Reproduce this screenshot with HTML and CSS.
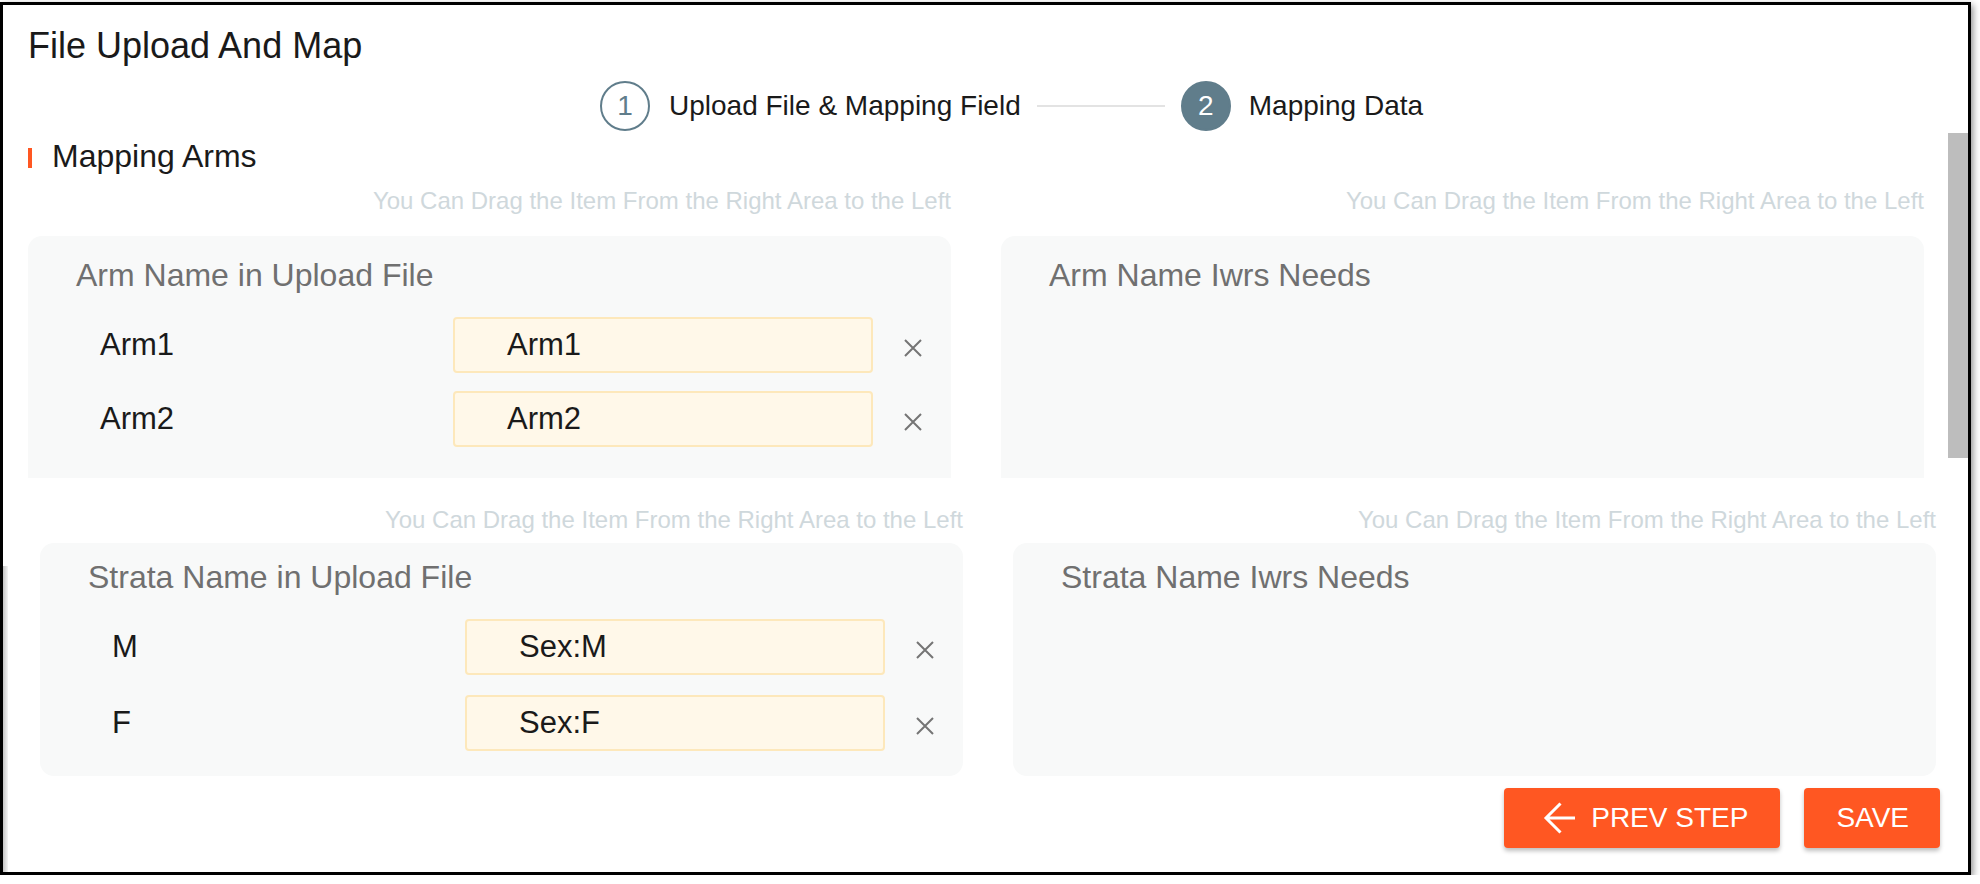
FILE: index.html
```html
<!DOCTYPE html>
<html lang="en">
<head>
  <meta charset="UTF-8">
  <title>File Upload And Map</title>
  <link rel="stylesheet" href="styles.css">
</head>
<body>

<div class="dialog">
  <h1 class="dialog-title">File Upload And Map</h1>

  <div class="stepper">
    <div class="step">
      <span class="step-num">1</span>
      <span class="step-label">Upload File &amp; Mapping Field</span>
    </div>
    <div class="step-line"></div>
    <div class="step active">
      <span class="step-num">2</span>
      <span class="step-label">Mapping Data</span>
    </div>
  </div>

  <h2 class="section-title">Mapping Arms</h2>

  <div class="mapping mapping-arms">
    <div class="mapping-col">
      <p class="hint">You Can Drag the Item From the Right Area to the Left</p>
      <div class="card">
        <h3 class="card-title">Arm Name in Upload File</h3>
        <div class="rows">
          <div class="row">
            <span class="row-label">Arm1</span>
            <div class="drop">Arm1</div>
            <svg class="remove" viewBox="0 0 18 18"><path d="M1 1L17 17M17 1L1 17"/></svg>
          </div>
          <div class="row">
            <span class="row-label">Arm2</span>
            <div class="drop">Arm2</div>
            <svg class="remove" viewBox="0 0 18 18"><path d="M1 1L17 17M17 1L1 17"/></svg>
          </div>
        </div>
      </div>
    </div>
    <div class="mapping-col">
      <p class="hint">You Can Drag the Item From the Right Area to the Left</p>
      <div class="card">
        <h3 class="card-title">Arm Name Iwrs Needs</h3>
      </div>
    </div>
  </div>

  <div class="mapping mapping-strata">
    <div class="mapping-col">
      <p class="hint">You Can Drag the Item From the Right Area to the Left</p>
      <div class="card">
        <h3 class="card-title">Strata Name in Upload File</h3>
        <div class="rows">
          <div class="row">
            <span class="row-label">M</span>
            <div class="drop">Sex:M</div>
            <svg class="remove" viewBox="0 0 18 18"><path d="M1 1L17 17M17 1L1 17"/></svg>
          </div>
          <div class="row">
            <span class="row-label">F</span>
            <div class="drop">Sex:F</div>
            <svg class="remove" viewBox="0 0 18 18"><path d="M1 1L17 17M17 1L1 17"/></svg>
          </div>
        </div>
      </div>
    </div>
    <div class="mapping-col">
      <p class="hint">You Can Drag the Item From the Right Area to the Left</p>
      <div class="card">
        <h3 class="card-title">Strata Name Iwrs Needs</h3>
      </div>
    </div>
  </div>

  <div class="footer">
    <button class="btn btn-prev">
      <svg class="btn-icon" viewBox="0 0 32 32"><path d="M32 16H3M17.5 1.5L3 16l14.5 14.5"/></svg>
      PREV STEP
    </button>
    <button class="btn">SAVE</button>
  </div>

  <div class="scroll-thumb"></div>
  <div class="edge-shade"></div>
</div>

</body>
</html>
```

FILE: styles.css
```css
* {
  box-sizing: border-box;
}

body {
  margin: 0;
  background: #fff;
  font-family: "Liberation Sans", Arial, sans-serif;
  color: #212121;
}

.dialog {
  position: relative;
  width: 1971px;
  height: 873px;
  margin-top: 2px;
  border: 3px solid #000;
  box-shadow: 2px 3px 7px rgba(0, 0, 0, 0.45);
  padding: 21px 28px 0 25px;
  overflow: hidden;
}

.dialog-title {
  margin: 0;
  font-size: 36px;
  line-height: 40px;
  font-weight: normal;
  color: #1a1a1a;
}

/* stepper */
.stepper {
  display: flex;
  align-items: center;
  margin-top: 15px;
  padding-left: 572px;
}

.step {
  display: flex;
  align-items: center;
  gap: 19px;
}

.step.active {
  gap: 18px;
}

.step-num {
  width: 50px;
  height: 50px;
  border-radius: 50%;
  border: 2px solid #607d8b;
  color: #607d8b;
  display: flex;
  align-items: center;
  justify-content: center;
  font-size: 28px;
}

.step.active .step-num {
  background: #607d8b;
  color: #fff;
}

.step-label {
  font-size: 28px;
  color: #1a1a1a;
}

.step-line {
  width: 128px;
  height: 2px;
  background: #e3e3e3;
  margin: 0 16px;
}

/* section */
.section-title {
  display: flex;
  align-items: center;
  gap: 20px;
  margin: 8px 0 0;
  font-size: 32px;
  line-height: 34px;
  font-weight: normal;
  color: #1a1a1a;
}

.section-title::before {
  content: "";
  width: 4px;
  height: 20px;
  margin-top: 3px;
  background: #ff5722;
}

.mapping {
  display: grid;
  grid-template-columns: 923px 923px;
  column-gap: 50px;
  margin-top: 14px;
}

.mapping-strata {
  margin-top: 28px;
  margin-left: 12px;
}

.mapping-col {
  display: flex;
  flex-direction: column;
}

.hint {
  margin: 0;
  text-align: right;
  font-size: 24px;
  line-height: 28px;
  color: #cfd8dc;
}

.card {
  flex: 1;
  margin-top: 21px;
  background: #f8f9f9;
  border-radius: 14px 14px 0 0;
  padding: 22px 48px 31px;
}

.mapping-strata .card {
  margin-top: 9px;
  border-radius: 14px;
  padding-top: 17px;
  padding-bottom: 25px;
}

.card-title {
  margin: 0;
  font-size: 32px;
  line-height: 34px;
  font-weight: normal;
  color: #707070;
}

.rows {
  display: flex;
  flex-direction: column;
  gap: 18px;
  margin-top: 25px;
}

.mapping-strata .rows {
  gap: 20px;
}

.row {
  display: flex;
  align-items: center;
  padding-left: 24px;
}

.row-label {
  width: 353px;
  flex-shrink: 0;
  font-size: 31px;
  color: #1a1a1a;
}

.drop {
  width: 420px;
  height: 56px;
  flex-shrink: 0;
  display: flex;
  align-items: center;
  padding-left: 52px;
  border: 2px solid #fde8bb;
  border-radius: 4px;
  background: #fff8e9;
  font-size: 31px;
  color: #1a1a1a;
}

.remove {
  width: 18px;
  height: 18px;
  flex-shrink: 0;
  margin: 5px 0 0 31px;
  fill: none;
  stroke: #757575;
  stroke-width: 2;
}

/* footer buttons */
.footer {
  display: flex;
  justify-content: flex-end;
  gap: 24px;
  margin-top: 12px;
}

.btn {
  height: 60px;
  display: flex;
  align-items: center;
  padding: 0 31px 0 32px;
  border: none;
  border-radius: 4px;
  background: #ff5722;
  color: #fff;
  font-family: inherit;
  font-size: 28px;
  box-shadow: 0 3px 4px rgba(0, 0, 0, 0.25);
  cursor: pointer;
}

.btn-prev {
  gap: 16px;
  padding: 0 32px 0 39px;
}

.btn-icon {
  width: 32px;
  height: 32px;
  fill: none;
  stroke: #fff;
  stroke-width: 3;
}

/* decoration */
.scroll-thumb {
  position: absolute;
  top: 128px;
  right: 0;
  width: 20px;
  height: 325px;
  background: #bdbdbd;
}

.edge-shade {
  position: absolute;
  left: 0;
  top: 561px;
  bottom: 0;
  width: 5px;
  background: linear-gradient(to right, #c4c4c4, #f4f4f4);
}
```
